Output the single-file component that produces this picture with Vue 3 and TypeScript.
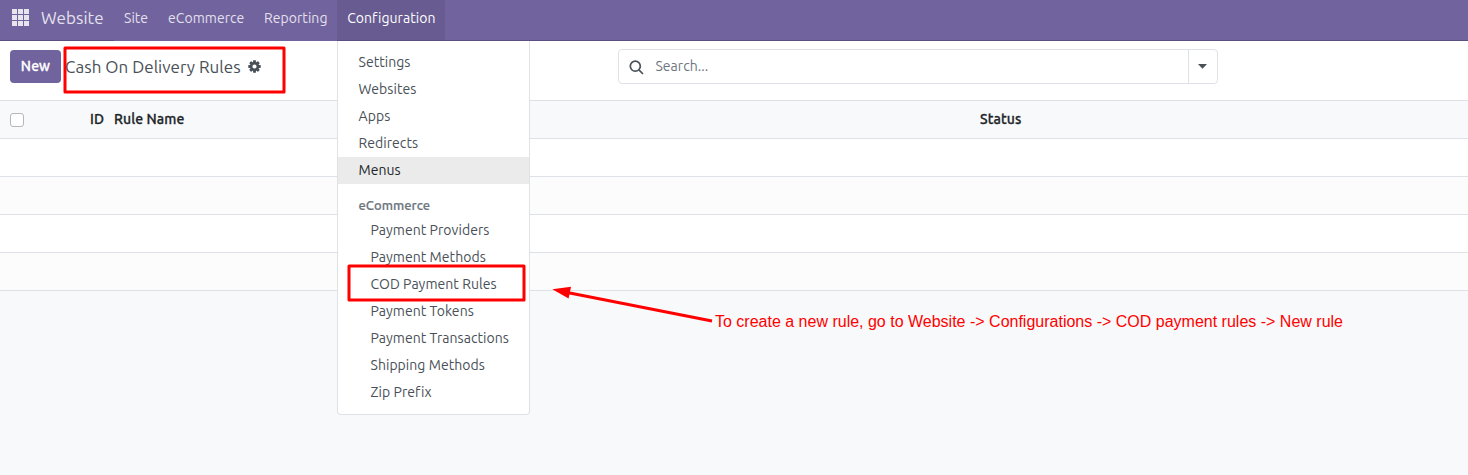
<script setup lang="ts">
interface Label {
  text: string
  cls?: string
}

const navItems: Label[] = [
  { text: 'Site', cls: 'site' },
  { text: 'eCommerce', cls: 'ecommerce' },
  { text: 'Reporting', cls: 'reporting' },
  { text: 'Configuration', cls: 'active' },
]
const mainItems = ['Settings', 'Websites', 'Apps', 'Redirects', 'Menus']
const shopItems = [
  'Payment Providers',
  'Payment Methods',
  'COD Payment Rules',
  'Payment Tokens',
  'Payment Transactions',
  'Shipping Methods',
  'Zip Prefix',
]
const teeth = [0, 45, 90, 135, 180, 225, 270, 315]
const cells = [0, 1, 2, 3, 4, 5, 6, 7, 8]
</script>

<template>
  <div class="page">
    <nav class="navbar">
      <svg class="apps" width="17" height="17" viewBox="0 0 17 17">
        <rect v-for="c in cells" :key="c" :x="(c % 3) * 6" :y="Math.floor(c / 3) * 6" width="5" height="5" />
      </svg>
      <span class="brand">Website</span>
      <a v-for="n in navItems" :key="n.text" class="nav-item" :class="n.cls"><span>{{ n.text }}</span></a>
    </nav>

    <header class="panel">
      <button class="new">New</button>
      <h1 class="title">Cash On Delivery Rules</h1>
      <svg class="gear" width="13" height="13" viewBox="-6.5 -6.5 13 13">
        <rect v-for="t in teeth" :key="t" x="-1.4" y="-6.2" width="2.8" height="3" rx=".3" :transform="`rotate(${t})`" />
        <circle r="3.4" fill="none" stroke-width="2.6" />
      </svg>
      <div class="search">
        <svg class="lens" width="16" height="16" viewBox="0 0 16 16">
          <circle cx="6.3" cy="6.2" r="5" />
          <path d="M9.9 9.9 14 14" />
        </svg>
        <span class="placeholder">Search...</span>
        <span class="toggle"><svg width="9" height="5" viewBox="0 0 9 5"><path d="M0 0H9L4.5 4.8Z" /></svg></span>
      </div>
    </header>

    <main class="list">
      <div class="row head">
        <span class="check"></span>
        <span class="id">ID</span>
        <span class="name">Rule Name</span>
        <span class="status">Status</span>
      </div>
      <div v-for="r in 4" :key="r" class="row" :class="{ striped: r % 2 === 0 }"></div>
    </main>

    <div class="menu">
      <a v-for="m in mainItems" :key="m" class="item" :class="{ hovered: m === 'Menus' }">{{ m }}</a>
      <div class="section">eCommerce</div>
      <a v-for="m in shopItems" :key="m" class="item nested">{{ m }}</a>
    </div>

    <svg class="marks" width="1468" height="475" viewBox="0 0 1468 475">
      <rect x="65" y="48" width="219" height="44" />
      <rect x="349" y="266" width="175" height="34" />
      <path class="shaft" d="M566 292.2 712 321" />
      <path class="tip" d="M552.3 289.3 571 286.8 568.6 298.4Z" />
    </svg>
    <p class="note">To create a new rule, go to Website -&gt; Configurations -&gt; COD payment rules -&gt; New rule</p>
  </div>
</template>

<style>
body { margin: 0; background: #f8f9fa; }
</style>

<style scoped>
.page {
  position: relative;
  width: 1468px;
  height: 475px;
  overflow: hidden;
  box-sizing: border-box;
  background: #f8f9fa;
  color: #495057;
  font: 14px/27px Ubuntu, "Noto Sans", sans-serif;
  font-variant-ligatures: none;
  letter-spacing: .05px;
  white-space: nowrap;
}
.page * { box-sizing: border-box; }
.navbar {
  display: flex;
  height: 41px;
  background: #71639e;
  border-bottom: 1px solid #5a4f7f;
  color: #e3e0ec;
}
.apps { margin: 9px 12px 0; fill: #e7e4ee; flex: none; }
.brand { width: 73px; font-size: 17px; line-height: 36px; }
.nav-item { height: 41px; line-height: 36px; background: #71639e; padding-left: 10px; flex: none; }
.site { width: 44px; }
.ecommerce { width: 96px; }
.reporting { width: 83px; }
.active { width: 108px; padding-left: 10.2px; background: #685b91; border-bottom: 1px solid #5a4f7f; color: #fff; }
.panel {
  display: flex;
  height: 60px;
  padding: 9px 10px 0;
  background: #fff;
  border-bottom: 1px solid #dee2e6;
}
.new {
  width: 51px;
  height: 33px;
  border: 0;
  border-radius: 4px;
  padding: 0 0 1px;
  background: #71639e;
  color: #fff;
  font: 500 14px/32px Ubuntu, "Noto Sans", sans-serif;
  letter-spacing: .1px;
  -webkit-text-stroke: .3px currentColor;
}
.title { width: 183px; margin: 0 0 0 4px; font-size: 17px; font-weight: 400; line-height: 34px; letter-spacing: .03px; }
.gear { margin-top: 10px; fill: #495057; stroke: none; flex: none; }
.gear circle { stroke: #495057; }
.search {
  display: flex;
  width: 600px;
  height: 35px;
  margin: -1px 0 0 357px;
  border: 1px solid #dee2e6;
  border-radius: 4px;
}
.lens { margin: 10px 0 0 10px; fill: none; stroke: #495057; stroke-width: 1.7; }
.placeholder { margin-left: 10.4px; line-height: 32px; color: #6c757d; }
.toggle {
  display: flex;
  align-items: center;
  justify-content: center;
  width: 29px;
  margin-left: auto;
  padding-right: 1px;
  border-left: 1px solid #dee2e6;
}
.toggle path { fill: #495057; }
.row { display: flex; height: 38px; background: #fff; border-bottom: 1px solid #dee2e6; }
.striped { background: #fcfcfc; }
.head { background: #f8f9fa; color: #212529; font-weight: 500; line-height: 36px; letter-spacing: .1px; -webkit-text-stroke: .3px currentColor; }
.check { width: 14px; height: 14px; margin: 12px 0 0 10px; border: 1px solid #b5b7ba; border-radius: 3px; background: #fff; }
.id { width: 90px; padding-left: 66px; }
.name { width: 866px; }
.menu {
  position: absolute;
  left: 337px;
  top: 41px;
  width: 193px;
  height: 374px;
  padding-top: 8px;
  background: #fff;
  border: 1px solid #dee2e6;
  border-top: 0;
  border-radius: 0 0 4px 4px;
}
.item { display: block; height: 27px; padding-left: 20.5px; line-height: 26px; }
.hovered { background: #ebebeb; color: #212529; }
.section { height: 33px; padding: 8px 0 0 20.5px; font-size: 13px; font-weight: 500; color: #6c757d; -webkit-text-stroke: .2px currentColor; }
.nested { padding-left: 32.5px; }
.marks { position: absolute; left: 0; top: 0; fill: none; stroke: #f00; stroke-width: 3; stroke-linejoin: round; }
.marks .tip { fill: #f00; stroke: none; }
.note {
  position: absolute;
  left: 715px;
  top: 312px;
  margin: 0;
  font: 16px/20px "Liberation Sans", Arial, sans-serif;
  letter-spacing: 0;
  color: #f00;
}
</style>
